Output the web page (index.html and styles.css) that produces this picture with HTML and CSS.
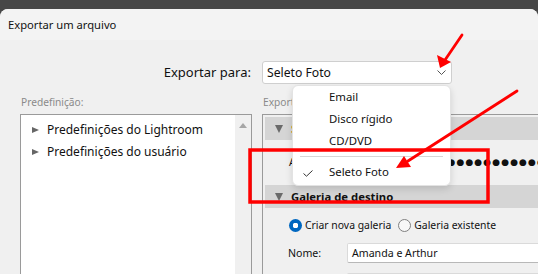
FILE: index.html
```html
<!DOCTYPE html>
<html lang="pt">
<head>
<meta charset="utf-8">
<link rel="stylesheet" href="styles.css">
</head>
<body>
<div class="topbar"></div>
<div class="dialog">
  <div class="titlebar">Exportar um arquivo</div>
  <div class="body">
    <div class="export-label">Exportar para:</div>
    <div class="select-wrap">
      <div class="select">
        <span>Seleto Foto</span>
        <svg class="chev" width="9" height="5" viewBox="0 0 9 5"><path d="M0.5 0.5 L4.5 4.5 L8.5 0.5" fill="none" stroke="#555" stroke-width="1"/></svg>
      </div>
      <div class="menu">
        <div class="mi">Email</div>
        <div class="mi">Disco rígido</div>
        <div class="mi">CD/DVD</div>
        <div class="sep"></div>
        <div class="mi">
          <svg class="check" width="10" height="7" viewBox="0 0 10 7"><path d="M0.5 3.5 L3.5 6.2 L9.5 0.5" fill="none" stroke="#333" stroke-width="1"/></svg>
          Seleto Foto
        </div>
      </div>
    </div>

    <div class="col-label">Predefinição:</div>
    <div class="col-label">Exportar para:</div>

    <div class="listbox">
      <div class="list">
        <div class="li"><span class="tri-r"></span>Predefinições do Lightroom</div>
        <div class="li"><span class="tri-r"></span>Predefinições do usuário</div>
      </div>
      <div class="scroll"><span class="tri-up"></span></div>
    </div>

    <div class="panel">
      <div class="sec-head"><span class="tri-d"></span><span class="orange">Seleto Foto</span></div>
      <div class="sec-row">
        <span class="row-label">Acesso:</span>
        <span class="dots">●●●●●●●●●●●●●●●●●●●●●●●●●●●●</span>
      </div>
      <div class="sec-head"><span class="tri-d"></span><b>Galeria de destino</b></div>
      <div class="radios">
        <span class="radio on"></span><span class="rl">Criar nova galeria</span>
        <span class="radio"></span><span class="rl">Galeria existente</span>
      </div>
      <div class="field-row">
        <span class="row-label">Nome:</span>
        <div class="input">Amanda e Arthur</div>
      </div>
      <div class="field-row next">
        <span class="row-label"></span>
        <div class="input"></div>
      </div>
    </div>
  </div>
</div>

<svg class="annot" width="538" height="274" viewBox="0 0 538 274">
  <rect x="250" y="150" width="238" height="52" fill="none" stroke="#ff0000" stroke-width="3.5"/>
  <line x1="462" y1="35" x2="445" y2="60" stroke="#ff0000" stroke-width="2.8" stroke-linecap="round"/>
  <polygon points="440,68 437,55 451,62" fill="#ff0000"/>
  <line x1="517" y1="91" x2="408" y2="161" stroke="#ff0000" stroke-width="2.8" stroke-linecap="round"/>
  <polygon points="396,168 404,156 411,167" fill="#ff0000"/>
</svg>
</body>
</html>
```

FILE: styles.css
```css
* { box-sizing: border-box; }
html, body {
  margin: 0;
  padding: 0;
  width: 538px;
  height: 274px;
  overflow: hidden;
  background: #474747;
  font-family: "Noto Sans", "Open Sans", sans-serif;
  font-size: 12px;
  color: #111;
}
.topbar {
  height: 9px;
  background: #474747;
}
.dialog {
  background: #f0f0f0;
  border-radius: 8px 8px 0 0;
  height: 265px;
  overflow: hidden;
}
.titlebar {
  height: 31px;
  background: #f3f3f3;
  padding-left: 8px;
  line-height: 31px;
  font-size: 11.2px;
}
.body {
  display: grid;
  grid-template-columns: 232px 1fr;
  column-gap: 10px;
  padding: 21px 0 0 20px;
}
.export-label {
  text-align: right;
  line-height: 23px;
  font-size: 13px;
  padding-right: 1px;
}
.select-wrap {
  position: relative;
  width: 190px;
}
.select {
  height: 23px;
  background: #fff;
  border: 1px solid #cfcfcf;
  border-radius: 3px;
  display: flex;
  align-items: center;
  justify-content: space-between;
  padding: 0 5px 0 4px;
  font-size: 12.2px;
}
.menu {
  position: absolute;
  left: 30px;
  top: 24px;
  width: 159px;
  height: 101px;
  background: #fff;
  border: 1px solid #e3e3e3;
  border-radius: 6px;
  box-shadow: 0 3px 7px rgba(0,0,0,0.13);
  z-index: 5;
  font-size: 11.4px;
}
.mi {
  height: 22px;
  line-height: 22px;
  padding-left: 36px;
  position: relative;
}
.check {
  position: absolute;
  left: 10px;
  top: 9px;
}
.sep {
  height: 1px;
  background: #d6d6d6;
  margin: 4px 7px 4px 7px;
}
.col-label {
  margin-top: 11px;
  height: 19px;
  line-height: 14px;
  color: #8a8a8a;
  padding-left: 1px;
  font-size: 10.2px;
}
.listbox {
  height: 170px;
  background: #fff;
  border: 1px solid #9a9a9a;
  display: flex;
}
.list {
  flex: 1;
  padding-top: 4px;
}
.li {
  height: 22px;
  line-height: 22px;
  display: flex;
  align-items: center;
  font-size: 12px;
}
.tri-r {
  width: 0;
  height: 0;
  border-top: 3.5px solid transparent;
  border-bottom: 3.5px solid transparent;
  border-left: 7px solid #666;
  margin: 0 8px 0 11px;
}
.scroll {
  width: 16px;
  background: #f0f0f0;
  display: flex;
  justify-content: center;
  padding-top: 8px;
}
.tri-up {
  width: 0;
  height: 0;
  border-left: 4px solid transparent;
  border-right: 4px solid transparent;
  border-bottom: 5px solid #a6a6a6;
}
.panel {
  height: 170px;
  border: 1px solid #9a9a9a;
  border-right: none;
  padding: 2px 0 0 2px;
  background: #f0f0f0;
  font-size: 10.6px;
}
.sec-head {
  height: 23px;
  background: #d5d5d5;
  display: flex;
  align-items: center;
  font-size: 11.3px;
}
.tri-d {
  width: 0;
  height: 0;
  border-left: 4.5px solid transparent;
  border-right: 4.5px solid transparent;
  border-top: 8px solid #6a6a6a;
  margin: 0 8px 0 10px;
}
.orange { color: #d97a00; font-weight: bold; }
.sec-row {
  height: 45px;
  display: flex;
  align-items: center;
  padding: 0 0 1px 24px;
  overflow: hidden;
}
.row-label {
  width: 59px;
  flex: none;
}
.dots {
  flex: 1;
  overflow: hidden;
  margin-left: 1px;
  font-family: "DejaVu Sans", sans-serif;
  font-size: 9px;
  letter-spacing: 1.1px;
  white-space: nowrap;
  line-height: 12px;
}
.radios {
  height: 34px;
  display: flex;
  align-items: center;
  padding-left: 24px;
}
.radio {
  width: 13px;
  height: 13px;
  border-radius: 50%;
  border: 1px solid #808080;
  background: #f7f7f7;
  flex: none;
}
.radio.on {
  border: none;
  background: radial-gradient(circle, #fff 0 2.6px, #0067c0 3px);
}
.rl { margin: 0 7px 0 3px; font-size: 10.4px; }
.field-row {
  height: 21px;
  display: flex;
  align-items: center;
  padding-left: 23px;
}
.field-row.next { margin-top: 9px; }
.input {
  flex: 1;
  height: 20px;
  background: #fff;
  border: 1px solid #dadada;
  border-bottom-color: #b8b8b8;
  border-radius: 2px;
  padding-left: 4px;
  line-height: 18px;
}
.annot {
  position: absolute;
  left: 0;
  top: 0;
  pointer-events: none;
  z-index: 10;
}
```
